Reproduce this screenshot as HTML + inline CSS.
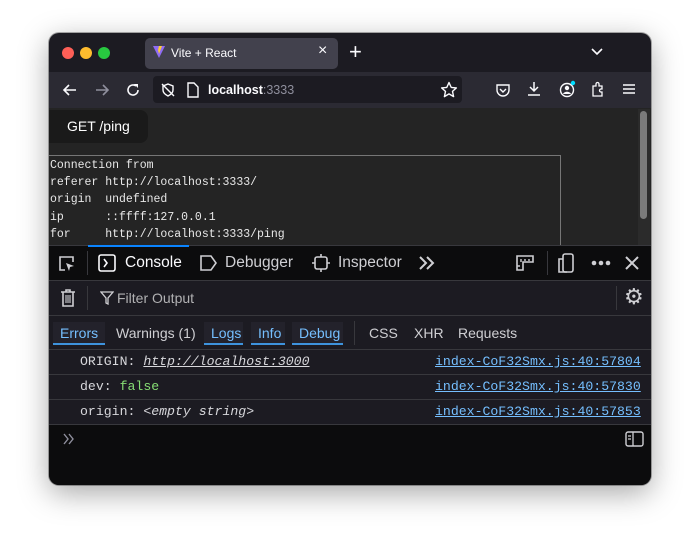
<!DOCTYPE html>
<html><head><style>
*{margin:0;padding:0;box-sizing:border-box}
body{width:700px;height:550px;background:#fff;position:relative;overflow:hidden;font-family:"Liberation Sans",sans-serif}
.win{position:absolute;left:49px;top:33px;width:602px;height:452px;border-radius:10px;overflow:hidden;background:#1c1b22;box-shadow:0 8px 30px rgba(0,0,0,.35),0 0 0 1px rgba(0,0,0,.3)}
.a{position:absolute}
.mono{font-family:"Liberation Mono","DejaVu Sans Mono",monospace}
svg{position:absolute}
</style></head><body>
<div class="win">
 <!-- tab bar -->
 <div class="a" style="left:13px;top:14px;width:12px;height:12px;border-radius:6px;background:#fe5f57"></div>
 <div class="a" style="left:31px;top:14px;width:12px;height:12px;border-radius:6px;background:#febc2e"></div>
 <div class="a" style="left:49px;top:14px;width:12px;height:12px;border-radius:6px;background:#28c840"></div>
 <div class="a" style="left:96px;top:5px;width:193px;height:31px;border-radius:5px;background:#42414d"></div>
 <svg style="left:103px;top:12px" width="14" height="14" viewBox="0 0 14 14"><path d="M1 1L7 13L13 1Z" fill="#8f6cf6"/><path d="M7 1L10 1L7 9L6 5Z" fill="#fdcb32"/></svg>
 <div class="a" style="left:122px;top:13px;color:#fbfbfe;font-size:12px">Vite + React</div>
 <div class="a" style="left:269px;top:9px;color:#fbfbfe;font-size:16px">×</div>
 <div class="a" style="left:300px;top:6px;color:#fbfbfe;font-size:22px;font-weight:300">+</div>
 <svg style="left:541px;top:14px" width="14" height="10"><path d="M2 2L7 7L12 2" stroke="#fbfbfe" stroke-width="1.6" fill="none"/></svg>
 <!-- toolbar -->
 <div class="a" style="left:0;top:39px;width:602px;height:36px;background:#2b2a33"></div>
 <svg style="left:13px;top:49px" width="16" height="16"><path d="M14 8H2M7 3L2 8L7 13" stroke="#fbfbfe" stroke-width="1.6" fill="none"/></svg>
 <svg style="left:45px;top:49px" width="16" height="16"><path d="M2 8H14M9 3L14 8L9 13" stroke="#8f8f9d" stroke-width="1.6" fill="none"/></svg>
 <svg style="left:76px;top:49px" width="16" height="16"><path d="M13 8A5 5 0 1 1 11 4" stroke="#fbfbfe" stroke-width="1.6" fill="none"/><path d="M9 2H13V6Z" fill="#fbfbfe"/></svg>
 <div class="a" style="left:104px;top:43px;width:309px;height:27px;border-radius:4px;background:#1c1b22"></div>
 <svg style="left:111px;top:49px" width="16" height="16"><path d="M8 2L13 4V8C13 11 10 13 8 14C6 13 3 11 3 8V4Z" stroke="#fbfbfe" stroke-width="1.4" fill="none"/><path d="M2 2L14 14" stroke="#fbfbfe" stroke-width="1.4"/></svg>
 <svg style="left:137px;top:49px" width="14" height="16"><path d="M2 1H8L12 5V15H2Z" stroke="#fbfbfe" stroke-width="1.4" fill="none"/></svg>
 <div class="a" style="left:159px;top:50px;color:#fbfbfe;font-size:12.5px;font-weight:bold">localhost<span style="color:#8f8f9d;font-weight:normal">:3333</span></div>
 <svg style="left:391px;top:48px" width="18" height="18"><path d="M9 1.5L11.2 6.4L16.4 6.9L12.5 10.4L13.6 15.6L9 12.9L4.4 15.6L5.5 10.4L1.6 6.9L6.8 6.4Z" stroke="#fbfbfe" stroke-width="1.4" fill="none" stroke-linejoin="round"/></svg>
 <svg style="left:446px;top:49px" width="16" height="16"><path d="M2 3H14V8A6 6 0 0 1 2 8Z" stroke="#fbfbfe" stroke-width="1.4" fill="none"/><path d="M5 7L8 10L11 7" stroke="#fbfbfe" stroke-width="1.4" fill="none"/></svg>
 <svg style="left:477px;top:48px" width="16" height="16"><path d="M8 1V10M4 6L8 10L12 6M2 14H14" stroke="#fbfbfe" stroke-width="1.5" fill="none"/></svg>
 <svg style="left:510px;top:47px" width="18" height="18"><circle cx="8" cy="10" r="6.5" stroke="#fbfbfe" stroke-width="1.4" fill="none"/><circle cx="8" cy="8" r="2.2" fill="#fbfbfe"/><path d="M4 14C5 11 11 11 12 14" fill="#fbfbfe"/><circle cx="14" cy="3" r="2.2" fill="#0df"/></svg>
 <svg style="left:541px;top:48px" width="16" height="17"><path d="M3 5H6V3A1.5 1.5 0 0 1 9 3V5H12V8H11A1.5 1.5 0 0 0 11 11H12V15H3Z" stroke="#fbfbfe" stroke-width="1.3" fill="none"/></svg>
 <svg style="left:573px;top:50px" width="14" height="12"><path d="M1 2H13M1 6H13M1 10H13" stroke="#fbfbfe" stroke-width="1.5"/></svg>
 <!-- content -->
 <div class="a" style="left:0;top:75px;width:602px;height:137px;background:#242424"></div>
 <div class="a" style="left:0;top:77px;width:99px;height:33px;border-radius:0 8px 8px 0;background:#1a1a1a;color:#fff;font-size:14px;line-height:33px;padding-left:18px">GET /ping</div>
 <div class="a mono" style="left:0;top:122px;width:512px;height:95px;border:1px solid #767676;border-left:none;color:#e8e8e8;font-size:11.5px;line-height:17.2px;white-space:pre;padding:1px 1px">Connection from
referer http://localhost:3333/
origin  undefined
ip      ::ffff:127.0.0.1
for     http://localhost:3333/ping</div>
 <div class="a" style="left:589px;top:76px;width:12px;height:136px;background:#2b2b2b"></div>
 <div class="a" style="left:591px;top:78px;width:7px;height:108px;border-radius:4px;background:#7a7a7a"></div>
 <!-- devtools toolbar -->
 <div class="a" style="left:0;top:212px;width:602px;height:35px;background:#0c0c0d;border-top:1px solid #38383d"></div>
 <div class="a" style="left:39px;top:212px;width:101px;height:2px;background:#0a84ff"></div>
 <svg style="left:9px;top:222px" width="18" height="18"><path d="M7 15H2V2H15V7" stroke="#cfcfd3" stroke-width="1.6" fill="none"/><path d="M8 8L16 11L12 12L11 16Z" fill="#cfcfd3"/></svg>
 <div class="a" style="left:38px;top:218px;width:1px;height:24px;background:#38383d"></div>
 <svg style="left:49px;top:221px" width="18" height="18"><rect x="1" y="1" width="16" height="16" rx="2" stroke="#fbfbfe" stroke-width="1.6" fill="none"/><path d="M6 5L9 9L6 13" stroke="#fbfbfe" stroke-width="1.6" fill="none"/></svg>
 <div class="a" style="left:76px;top:221px;color:#fbfbfe;font-size:15.5px">Console</div>
 <svg style="left:150px;top:221px" width="19" height="18"><path d="M2 2H12L17 9L12 16H2Z" stroke="#cfcfd3" stroke-width="1.6" fill="none"/></svg>
 <div class="a" style="left:176px;top:221px;color:#cfcfd3;font-size:15.5px">Debugger</div>
 <svg style="left:263px;top:220px" width="18" height="20"><rect x="3" y="4" width="12" height="12" rx="2" stroke="#cfcfd3" stroke-width="1.6" fill="none"/><path d="M9 1V4M9 16V19M0 10H3M15 10H18" stroke="#cfcfd3" stroke-width="1.6"/></svg>
 <div class="a" style="left:289px;top:221px;color:#cfcfd3;font-size:15.5px">Inspector</div>
 <svg style="left:369px;top:222px" width="18" height="16"><path d="M2 2L8 8L2 14M9 2L15 8L9 14" stroke="#cfcfd3" stroke-width="2" fill="none"/></svg>
 <svg style="left:466px;top:221px" width="20" height="18"><path d="M2 2H18V8H8V16H2Z" stroke="#cfcfd3" stroke-width="1.6" fill="none"/><path d="M6 5V8M10 5V7M14 5V7M2 12H5" stroke="#cfcfd3" stroke-width="1.4"/></svg>
 <div class="a" style="left:498px;top:218px;width:1px;height:24px;background:#38383d"></div>
 <svg style="left:508px;top:219px" width="18" height="22"><rect x="6" y="2" width="10" height="18" rx="2" stroke="#cfcfd3" stroke-width="1.6" fill="none"/><path d="M6 7H2V20H10" stroke="#cfcfd3" stroke-width="1.6" fill="none"/></svg>
 <svg style="left:541px;top:226px" width="22" height="8"><circle cx="4" cy="4" r="2.3" fill="#cfcfd3"/><circle cx="11" cy="4" r="2.3" fill="#cfcfd3"/><circle cx="18" cy="4" r="2.3" fill="#cfcfd3"/></svg>
 <svg style="left:575px;top:222px" width="16" height="16"><path d="M2 2L14 14M14 2L2 14" stroke="#cfcfd3" stroke-width="2"/></svg>
 <!-- filter bar -->
 <div class="a" style="left:0;top:247px;width:602px;height:35px;background:#1c1b22;border-top:1px solid #38383d"></div>
 <svg style="left:11px;top:255px" width="16" height="20"><path d="M1 4H15M6 4V2H10V4" stroke="#cfcfd3" stroke-width="1.6" fill="none"/><path d="M3 4V18H13V4" stroke="#cfcfd3" stroke-width="1.6" fill="none"/><path d="M6 7V15M8 7V15M10 7V15" stroke="#cfcfd3" stroke-width="1.1"/></svg>
 <div class="a" style="left:38px;top:253px;width:1px;height:24px;background:#38383d"></div>
 <svg style="left:51px;top:258px" width="14" height="14"><path d="M1 1H13L8 7V13L6 12V7Z" stroke="#cfcfd3" stroke-width="1.3" fill="none"/></svg>
 <div class="a" style="left:68px;top:257px;color:#b1b1b3;font-size:14px">Filter Output</div>
 <div class="a" style="left:567px;top:253px;width:1px;height:24px;background:#38383d"></div>
 <div class="a" style="left:575px;top:251px;color:#cfcfd3;font-size:22px">⚙</div>
 <!-- filter buttons -->
 <div class="a" style="left:0;top:282px;width:602px;height:35px;background:#1c1b22;border-top:1px solid #38383d;border-bottom:1px solid #38383d"></div>
 <div class="a" style="left:4px;top:289px;width:52px;height:23px;background:#23222b;border-bottom:2px solid #3e93dd"></div>
 <div class="a" style="left:11px;top:292px;color:#75bfff;font-size:14px">Errors</div>
 <div class="a" style="left:67px;top:292px;color:#cfcfd3;font-size:14px">Warnings (1)</div>
 <div class="a" style="left:155px;top:289px;width:39px;height:23px;background:#23222b;border-bottom:2px solid #3e93dd"></div>
 <div class="a" style="left:162px;top:292px;color:#75bfff;font-size:14px">Logs</div>
 <div class="a" style="left:202px;top:289px;width:34px;height:23px;background:#23222b;border-bottom:2px solid #3e93dd"></div>
 <div class="a" style="left:209px;top:292px;color:#75bfff;font-size:14px">Info</div>
 <div class="a" style="left:243px;top:289px;width:51px;height:23px;background:#23222b;border-bottom:2px solid #3e93dd"></div>
 <div class="a" style="left:250px;top:292px;color:#75bfff;font-size:14px">Debug</div>
 <div class="a" style="left:305px;top:288px;width:1px;height:24px;background:#38383d"></div>
 <div class="a" style="left:320px;top:292px;color:#cfcfd3;font-size:14px">CSS</div>
 <div class="a" style="left:365px;top:292px;color:#cfcfd3;font-size:14px">XHR</div>
 <div class="a" style="left:409px;top:292px;color:#cfcfd3;font-size:14px">Requests</div>
 <!-- messages -->
 <div class="a mono" style="left:0;top:317px;width:602px;height:75px;background:#1c1b22;font-size:13.2px;color:#d7d7db">
  <div style="height:25px;border-bottom:1px solid #38383d;position:relative"><span class="a" style="left:31px;top:4px">ORIGIN: <i style="text-decoration:underline">http://localhost:3000</i></span><span class="a" style="left:386px;top:4px;color:#75bfff;text-decoration:underline">index-CoF32Smx.js:40:57804</span></div>
  <div style="height:25px;border-bottom:1px solid #38383d;position:relative"><span class="a" style="left:31px;top:4px">dev: <span style="color:#86de74">false</span></span><span class="a" style="left:386px;top:4px;color:#75bfff;text-decoration:underline">index-CoF32Smx.js:40:57830</span></div>
  <div style="height:25px;border-bottom:1px solid #38383d;position:relative"><span class="a" style="left:31px;top:4px">origin: <i>&lt;empty string&gt;</i></span><span class="a" style="left:386px;top:4px;color:#75bfff;text-decoration:underline">index-CoF32Smx.js:40:57853</span></div>
 </div>
 <div class="a" style="left:0;top:392px;width:602px;height:60px;background:#0c0c0d"></div>
 <svg style="left:13px;top:400px" width="14" height="12"><path d="M2 1L6 6L2 11M7 1L11 6L7 11" stroke="#8f8f9d" stroke-width="1.4" fill="none"/></svg>
 <svg style="left:576px;top:398px" width="19" height="16"><rect x="1" y="1" width="17" height="14" rx="2" stroke="#cfcfd3" stroke-width="1.4" fill="none"/><path d="M8 1V15M3 5H6M3 8H6" stroke="#cfcfd3" stroke-width="1.3"/></svg>
</div>
</body></html>
